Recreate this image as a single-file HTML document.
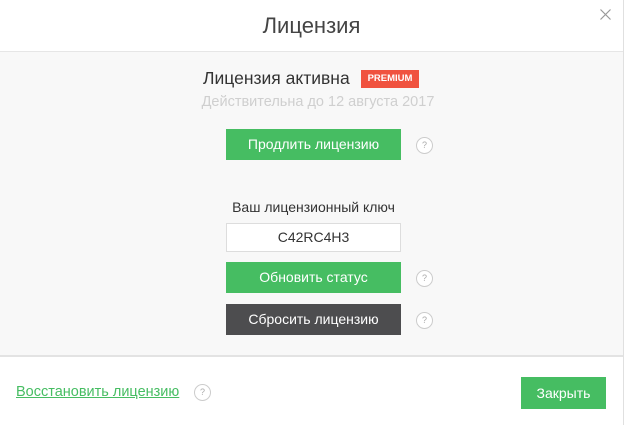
<!DOCTYPE html>
<html><head><meta charset="utf-8"><style>
body{margin:0;width:624px;height:425px;background:#fff;font-family:"Liberation Sans",sans-serif;position:relative;overflow:hidden;border-right:1px solid #e0e0e0;box-sizing:border-box}
.a{position:absolute}
.hdr{left:0;top:0;width:623px;height:51px;border-bottom:1px solid #e6e6e6;background:#fff}
.body{left:0;top:52px;width:623px;height:303px;background:#f8f8f8;border-bottom:2px solid #e3e3e3}
.btn{position:absolute;left:226px;width:175px;height:31px;color:#fff;font-size:14px;text-align:center;line-height:31px;background:#46bd62}
.q{position:absolute;width:15px;height:15px;border:1px solid #ccc;border-radius:50%;font-size:9px;color:#aaa;text-align:center;line-height:15px;background:#fff}
</style></head><body>
<div class="a hdr"></div>
<div class="a" style="left:0;width:623px;top:13px;text-align:center;font-size:22px;color:#444">Лицензия</div>
<svg class="a" style="left:600px;top:9px" width="11" height="11"><path d="M0.5 0.5L10.5 10.5M10.5 0.5L0.5 10.5" stroke="#999" stroke-width="1.2"/></svg>
<div class="a body"></div>
<div class="a" style="left:203px;top:68px;font-size:17.5px;color:#333">Лицензия активна</div>
<div class="a" style="left:361px;top:70px;width:58px;height:18px;background:#f0523f;color:#fff;font-size:9.5px;font-weight:bold;text-align:center;line-height:18px">PREMIUM</div>
<div class="a" style="left:0;width:636px;top:94px;text-align:center;font-size:14.5px;color:#cfcfcf">Действительна до 12 августа 2017</div>
<div class="btn" style="top:129px">Продлить лицензию</div>
<div class="q" style="left:416px;top:137px">?</div>
<div class="a" style="left:0;width:627px;top:199px;text-align:center;font-size:14px;color:#333">Ваш лицензионный ключ</div>
<div class="a" style="left:226px;top:223px;width:173px;height:27px;border:1px solid #ddd;background:#fff;text-align:center;line-height:27px;font-size:14px;color:#333">C42RC4H3</div>
<div class="btn" style="top:262px">Обновить статус</div>
<div class="q" style="left:416px;top:270px">?</div>
<div class="btn" style="top:304px;background:#4d4d4f">Сбросить лицензию</div>
<div class="q" style="left:416px;top:312px">?</div>
<div class="a" style="left:16px;top:384px;font-size:14.5px;color:#46bd62;text-decoration:underline">Восстановить лицензию</div>
<div class="q" style="left:194px;top:384px">?</div>
<div class="a" style="left:521px;top:377px;width:85px;height:32px;background:#46bd62;color:#fff;font-size:14px;text-align:center;line-height:32px">Закрыть</div>
</body></html>
